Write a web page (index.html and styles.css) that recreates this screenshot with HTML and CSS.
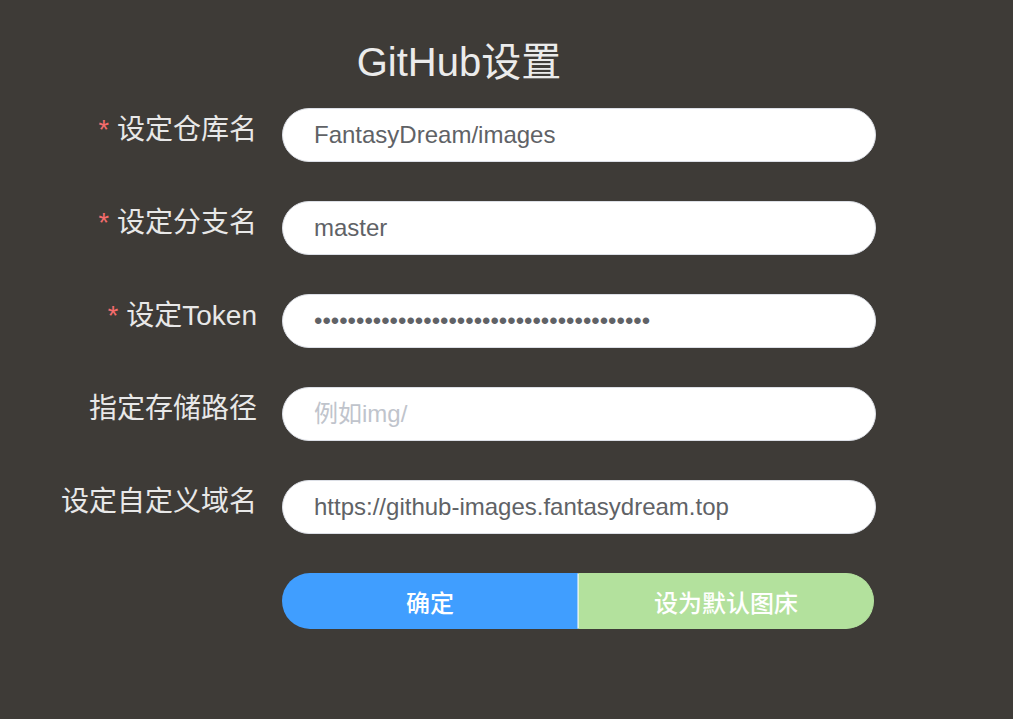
FILE: index.html
```html
<!DOCTYPE html>
<html lang="zh-CN">
<head>
<meta charset="utf-8">
<title>GitHub设置</title>
<link rel="stylesheet" href="styles.css">
</head>
<body>
<div class="panel">
  <h1 class="title">GitHub设置</h1>
  <form class="form">
    <div class="row">
      <label class="label required">设定仓库名</label>
      <div class="field"><input class="input" type="text" value="FantasyDream/images"></div>
    </div>
    <div class="row">
      <label class="label required">设定分支名</label>
      <div class="field"><input class="input" type="text" value="master"></div>
    </div>
    <div class="row">
      <label class="label required">设定Token</label>
      <div class="field"><input class="input" type="password" value="ghp_0123456789abcdefghijklmnopqrstuvwxyz"></div>
    </div>
    <div class="row">
      <label class="label">指定存储路径</label>
      <div class="field"><input class="input" type="text" placeholder="例如img/"></div>
    </div>
    <div class="row">
      <label class="label">设定自定义域名</label>
      <div class="field"><input class="input" type="text" value="https://github-images.fantasydream.top"></div>
    </div>
    <div class="row">
      <div class="label"></div>
      <div class="btn-group">
        <button type="button" class="btn btn-primary">确定</button>
        <button type="button" class="btn btn-success">设为默认图床</button>
      </div>
    </div>
  </form>
</div>
</body>
</html>
```

FILE: styles.css
```css
html, body {
  margin: 0;
  padding: 0;
  background: #3e3b37;
  height: 100%;
}
body {
  font-family: "Liberation Sans", "Noto Sans CJK SC", sans-serif;
}
.panel {
  width: 834px;
  margin-left: 42px;
  padding-top: 38px;
}
.title {
  margin: 0 0 22px 0;
  text-align: center;
  font-size: 40px;
  line-height: 48px;
  font-weight: normal;
  color: #ebebeb;
}
.form {
  display: flex;
  flex-direction: column;
  gap: 39px;
}
.row {
  display: flex;
  align-items: flex-start;
}
.label {
  width: 240px;
  box-sizing: border-box;
  padding-right: 25px;
  text-align: right;
  font-size: 28px;
  line-height: 44px;
  color: #e8e8e8;
  flex-shrink: 0;
}
.required::before {
  content: "*";
  color: #f56c6c;
  margin-right: 8px;
  font-size: 27px;
}
.field {
  flex: 1;
}
.input {
  display: block;
  width: 100%;
  box-sizing: border-box;
  height: 54px;
  border: 1px solid #dcdfe6;
  border-radius: 27px;
  background: #fff;
  padding: 0 31px;
  font-family: "Liberation Sans", "Noto Sans CJK SC", sans-serif;
  font-size: 24px;
  color: #606266;
  outline: none;
}
.input::placeholder {
  color: #c0c4cc;
}
.btn-group {
  display: flex;
  width: 592px;
}
.btn {
  flex: 1;
  height: 56px;
  box-sizing: border-box;
  font-family: "Liberation Sans", "Noto Sans CJK SC", sans-serif;
  font-size: 24px;
  font-weight: 500;
  color: #fff;
  cursor: pointer;
  padding: 0;
}
.btn-primary {
  background: #409eff;
  border: 1px solid #409eff;
  border-right-color: rgba(255, 255, 255, 0.5);
  border-radius: 28px 0 0 28px;
}
.btn-success {
  background: #b3e19d;
  border: 1px solid #b3e19d;
  border-left-color: #e1f3d8;
  border-radius: 0 28px 28px 0;
}
```
